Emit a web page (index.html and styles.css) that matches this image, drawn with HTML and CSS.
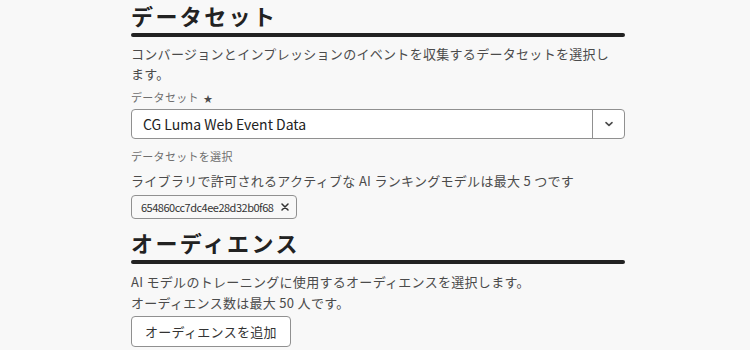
FILE: index.html
```html
<!DOCTYPE html>
<html lang="ja">
<head>
<meta charset="utf-8">
<link rel="stylesheet" href="styles.css">
</head>
<body>
<main class="page">
  <section class="section">
    <h2 class="heading">データセット</h2>
    <div class="rule"></div>
    <p class="desc wrap">コンバージョンとインプレッションのイベントを収集するデータセットを選択します。</p>
    <div class="field">
      <div class="label">データセット <span class="req">★</span></div>
      <div class="picker">
        <div class="picker-value">CG Luma Web Event Data</div>
        <div class="picker-btn">
          <svg width="10" height="10" viewBox="0 0 10 10"><path d="M2 3.6 L5 6.4 L8 3.6" fill="none" stroke="#4b4b4b" stroke-width="1.6" stroke-linecap="round" stroke-linejoin="round"/></svg>
        </div>
      </div>
      <div class="help">データセットを選択</div>
    </div>
    <p class="desc limit">ライブラリで許可されるアクティブな AI ランキングモデルは最大 5 つです</p>
    <div class="tags">
      <span class="tag">654860cc7dc4ee28d32b0f68
        <svg class="tag-x" width="8" height="8" viewBox="0 0 8 8"><path d="M1 1 L7 7 M7 1 L1 7" stroke="#333" stroke-width="1.5" stroke-linecap="round"/></svg>
      </span>
    </div>
  </section>
  <section class="section">
    <h2 class="heading">オーディエンス</h2>
    <div class="rule"></div>
    <p class="desc">AI モデルのトレーニングに使用するオーディエンスを選択します。</p>
    <p class="desc">オーディエンス数は最大 50 人です。</p>
    <button class="btn">オーディエンスを追加</button>
  </section>
</main>
</body>
</html>
```
FILE: styles.css
```css
html, body {
  margin: 0;
  padding: 0;
  background: #f8f8f8;
}
body {
  font-family: "Noto Sans CJK JP", "Noto Sans", sans-serif;
  color: #4b4b4b;
}
.page {
  width: 494px;
  margin-left: 131px;
  display: flex;
  flex-direction: column;
}
.section {
  display: flex;
  flex-direction: column;
}
.heading {
  margin: 0;
  padding-top: 1px;
  font-size: 22px;
  line-height: 28px;
  font-weight: 700;
  color: #222;
  letter-spacing: 2.4px;
}
.rule {
  height: 4px;
  background: #222;
  margin-top: 4px;
  border-radius: 2px;
}
.desc {
  margin: 0;
  font-size: 13px;
  line-height: 21px;
  letter-spacing: 0.3px;
  color: #4b4b4b;
}
.wrap {
  max-width: 484px;
  line-height: 20px;
}
.section > .rule + .desc {
  margin-top: 7px;
}
.field {
  display: flex;
  flex-direction: column;
  margin-top: 4px;
}
.label, .help {
  font-size: 11px;
  line-height: 18px;
  color: #6e6e6e;
  letter-spacing: 0.3px;
}
.req {
  font-size: 9px;
  color: #4b4b4b;
  margin-left: 2px;
}
.picker {
  display: flex;
  height: 30px;
  box-sizing: border-box;
  border: 1px solid #909090;
  border-radius: 4px;
  background: #fff;
  margin-top: 1px;
}
.picker-value {
  flex: 1;
  padding-left: 11px;
  font-size: 14px;
  line-height: 28px;
  color: #222;
}
.picker-btn {
  width: 31px;
  border-left: 1px solid #909090;
  display: flex;
  align-items: center;
  justify-content: center;
}
.help {
  margin-top: 8px;
}
.limit {
  margin-top: 5px;
}
.tags {
  display: flex;
  margin-top: 4px;
}
.tag {
  display: inline-flex;
  align-items: center;
  height: 24px;
  box-sizing: border-box;
  border: 1px solid #909090;
  border-radius: 4px;
  padding: 0 7px 0 9px;
  font-size: 11px;
  letter-spacing: -0.5px;
  color: #333;
  background: #f8f8f8;
}
.tag-x {
  margin-left: 8px;
}
.section + .section {
  margin-top: 8px;
}
.btn {
  align-self: flex-start;
  margin-top: 3px;
  height: 31px;
  padding: 0 13px;
  border: 1px solid #909090;
  border-radius: 4px;
  background: #fff;
  font-family: inherit;
  font-size: 13px;
  color: #333;
  letter-spacing: 0.3px;
}
```
